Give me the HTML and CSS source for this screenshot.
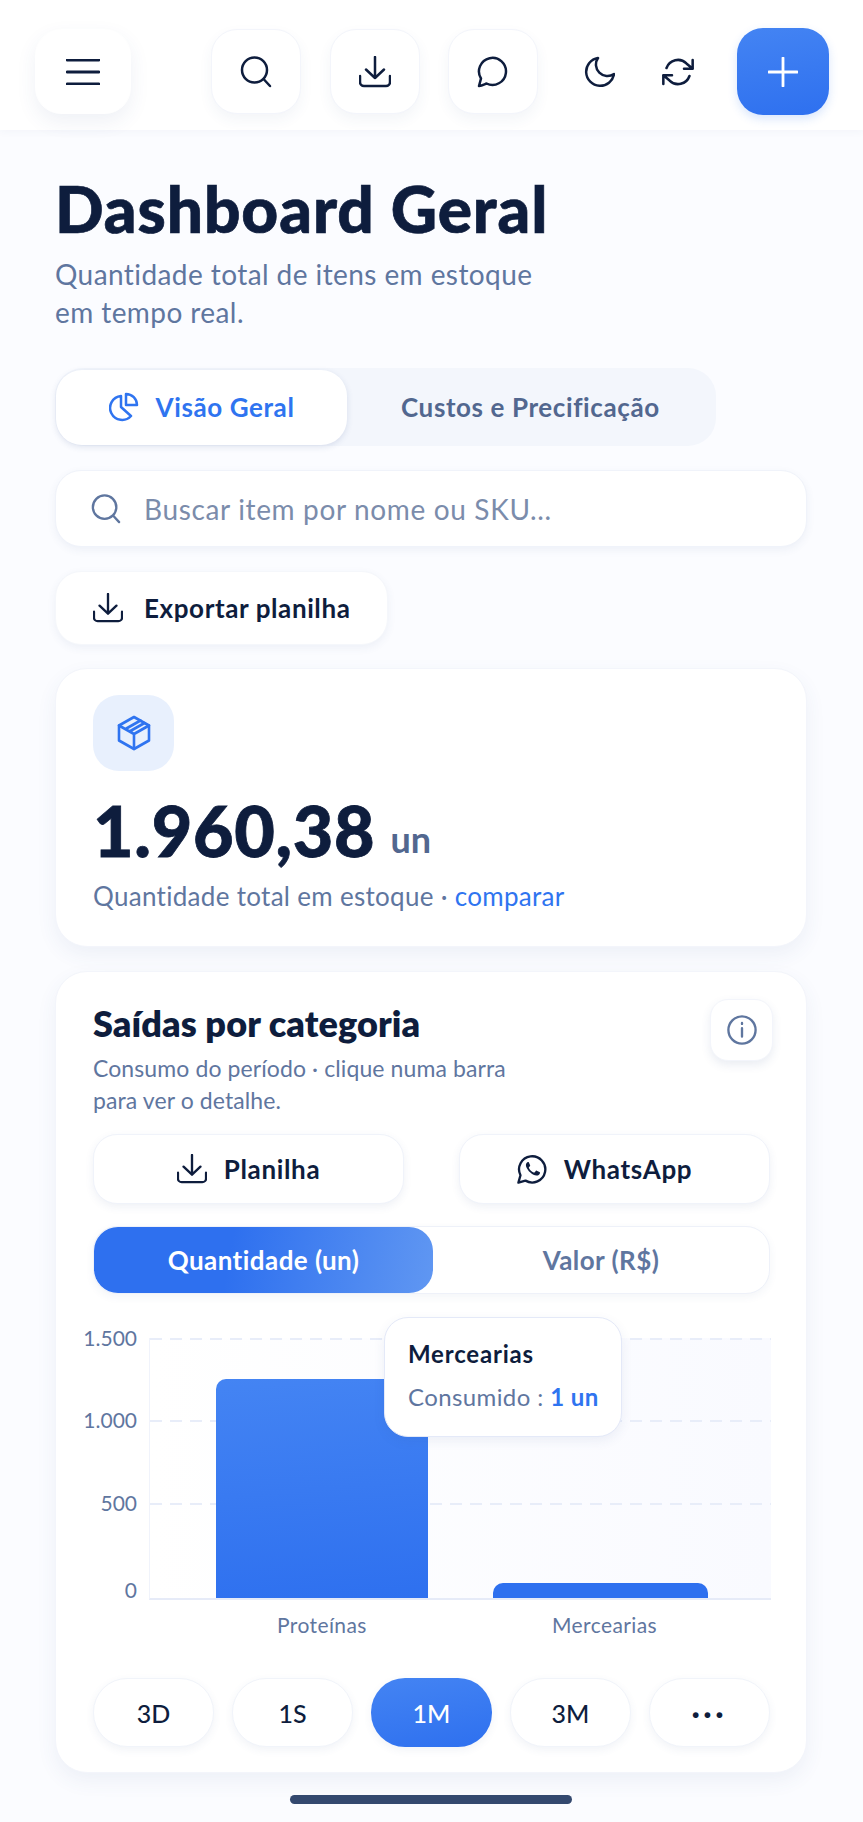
FILE: index.html
```html
<!DOCTYPE html>
<html lang="pt-BR">
<head>
<meta charset="utf-8">
<title>Dashboard Geral</title>
<link rel="stylesheet" href="styles.css">
</head>
<body>
<header class="topbar">
  <button class="icon-btn menu-btn" aria-label="Menu">
    <svg class="ico ico-menu" viewBox="0 0 34 26"><path d="M1 1h32M1 13h32M1 25h32"/></svg>
  </button>
  <div class="top-actions">
    <button class="icon-btn" aria-label="Buscar">
      <svg class="ico" viewBox="0 0 32 32"><circle cx="14.500" cy="14" r="12.500"/><path d="M24 23.500l6 6.500"/></svg>
    </button>
    <button class="icon-btn" aria-label="Baixar">
      <svg class="ico" viewBox="0 0 32 32"><path d="M16 1v21M7 13.500l9 8.500 9-8.500M1 20v6a4 4 0 0 0 4 4h22a4 4 0 0 0 4-4v-6"/></svg>
    </button>
    <button class="icon-btn" aria-label="Mensagens">
      <svg class="ico" viewBox="0 0 32 32"><path d="M2 30l2-7.500A13.500 13.500 0 1 1 9.500 27.500C7 28.500 4.500 29.700 2 30z"/></svg>
    </button>
  </div>
  <button class="plain-btn moon-btn" aria-label="Tema">
    <svg class="ico" viewBox="0 0 32 32"><path d="M15 2A14 14 0 1 0 31 18 11.500 11.500 0 0 1 15 2z"/></svg>
  </button>
  <button class="plain-btn sync-btn" aria-label="Atualizar">
    <svg class="ico ico-sync" viewBox="0 0 24 24"><path d="M23 3v6.500h-6.500M1 21v-6.500h6.500M3.400 9a9 9 0 0 1 14.900-3.400L23 9.500M1 14.500l4.700 3.900A9 9 0 0 0 20.600 15"/></svg>
  </button>
  <button class="add-btn" aria-label="Adicionar">
    <svg class="ico ico-plus" viewBox="0 0 32 32"><path d="M16 1v30M1 16h30"/></svg>
  </button>
</header>

<main class="page">
  <h1 class="title">Dashboard Geral</h1>
  <p class="subtitle">Quantidade total de itens em estoque<br>em tempo real.</p>

  <div class="tabs">
    <button class="tab tab-active">
      <svg class="ico ico-blue ico-30" viewBox="0 0 30 30"><path d="M12 4A12 12 0 1 0 22 24L12 15Z"/><path d="M17 2A11 11 0 0 1 28 13H17Z"/></svg>
      Visão Geral
    </button>
    <button class="tab">Custos e Precificação</button>
  </div>

  <div class="search">
    <svg class="ico ico-muted ico-30" viewBox="0 0 32 32"><circle cx="14.500" cy="14" r="12.500"/><path d="M24 23.500l6 6.500"/></svg>
    <span>Buscar item por nome ou SKU...</span>
  </div>

  <button class="export">
    <svg class="ico ico-30" viewBox="0 0 32 32"><path d="M16 1v21M7 13.500l9 8.500 9-8.500M1 20v6a4 4 0 0 0 4 4h22a4 4 0 0 0 4-4v-6"/></svg>
    Exportar planilha
  </button>

  <section class="card kpi">
    <div class="kpi-icon">
      <svg class="ico ico-blue ico-36" viewBox="0 0 36 36"><path d="M18 2l15 8.500v15L18 34 3 25.500v-15z"/><path d="M3 10.500L18 19l15-8.500M18 19v15M9.500 14l15-8.500M13.500 16.500l15-8.500"/></svg>
    </div>
    <div class="kpi-value">1.960,38 <span class="kpi-unit">un</span></div>
    <p class="kpi-note">Quantidade total em estoque · <a class="link">comparar</a></p>
  </section>

  <section class="card chart-card">
    <div class="chart-head">
      <div>
        <h2 class="chart-title">Saídas por categoria</h2>
        <p class="chart-sub">Consumo do período · clique numa barra<br>para ver o detalhe.</p>
      </div>
      <button class="info-btn" aria-label="Informações">
        <svg class="ico ico-muted ico-30" viewBox="0 0 32 32"><circle cx="16" cy="16" r="14.500"/><path d="M16 14v9M16 8.500v1"/></svg>
      </button>
    </div>

    <div class="share-row">
      <button class="share">
        <svg class="ico ico-30" viewBox="0 0 32 32"><path d="M16 1v21M7 13.500l9 8.500 9-8.500M1 20v6a4 4 0 0 0 4 4h22a4 4 0 0 0 4-4v-6"/></svg>
        Planilha
      </button>
      <button class="share share-wa">
        <svg class="ico ico-30" viewBox="0 0 32 32"><path d="M1.500 30.500l2.200-7.800A14 14 0 1 1 9 28.400z"/><path class="wa-fill" d="M11.500 8.500c-1 .3-2.200 1.700-2 3.800.3 3 4.500 9.500 11 10.700 2.200.3 3.800-1.200 4-2.800 0-.4-.1-.7-.5-.9l-3-1.500c-.4-.2-.7-.1-1 .2l-1.300 1.600c-.3.300-.6.300-1 .2-2-.9-3.900-2.700-5-4.800-.2-.3-.1-.6.100-.8l1.100-1.400c.2-.3.200-.5.100-.8l-1.300-3c-.2-.5-.6-.6-1.200-.5z"/></svg>
        WhatsApp
      </button>
    </div>

    <div class="segment">
      <button class="seg seg-active">Quantidade (un)</button>
      <button class="seg">Valor (R$)</button>
    </div>

    <div class="chart">
      <div class="y-axis">
        <span class="y-tick y-1500">1.500</span>
        <span class="y-tick y-1000">1.000</span>
        <span class="y-tick y-500">500</span>
        <span class="y-tick y-0">0</span>
      </div>
      <div class="plot">
        <i class="grid g-1500"></i>
        <i class="grid g-1000"></i>
        <i class="grid g-500"></i>
        <div class="bar bar-a"></div>
        <div class="bar bar-b"></div>
      </div>
      <div class="x-axis">
        <span class="x-a">Proteínas</span>
        <span class="x-b">Mercearias</span>
      </div>
      <div class="tooltip">
        <strong class="tip-title">Mercearias</strong>
        <span class="tip-row">Consumido : <b class="tip-val">1 un</b></span>
      </div>
    </div>

    <div class="pills">
      <button class="pill">3D</button>
      <button class="pill">1S</button>
      <button class="pill pill-active">1M</button>
      <button class="pill">3M</button>
      <button class="pill pill-more">···</button>
    </div>
  </section>
  <div class="home-bar"></div>
</main>
</body>
</html>
```

FILE: styles.css
```css
* { box-sizing: border-box; }
html, body { margin: 0; padding: 0; }
body {
  width: 863px;
  height: 1822px;
  overflow: hidden;
  background: #fbfcff;
  color: #0e1d3d;
  font-family: "Lato", "Open Sans", sans-serif;
}
button { font: inherit; letter-spacing: inherit; color: inherit; border: 0; background: none; padding: 0; margin: 0; }

.ico { width: 32px; height: 32px; fill: none; stroke: #0e1d3d; stroke-width: 2.500; stroke-linecap: round; stroke-linejoin: round; display: block; flex: none; }
.ico-menu { width: 34px; height: 26px; stroke-width: 2.800; }
.ico-sync { stroke-width: 1.900; }
.ico-30 { width: 30px; height: 30px; }
.ico-36 { width: 36px; height: 36px; stroke-width: 2.600; }
.ico-blue { stroke: #2f74f0; }
.ico-muted { stroke: #5f769f; }
.ico-plus { stroke: #fff; width: 30px; height: 30px; stroke-width: 3; }
.wa-fill { fill: #0e1d3d; stroke: none; }

.topbar {
  height: 130px;
  background: #fff;
  display: flex;
  align-items: center;
  padding: 13px 34px 0 35px;
  box-shadow: 0 2px 8px rgba(40, 70, 130, .04);
  position: relative;
}
.icon-btn {
  width: 90px;
  height: 85px;
  border-radius: 26px;
  background: #fff;
  border: 1px solid #f3f5fb;
  box-shadow: 0 6px 14px rgba(50, 80, 140, .06);
  display: flex;
  align-items: center;
  justify-content: center;
}
.menu-btn { width: 96px; border-color: #fff; box-shadow: 0 8px 20px rgba(50, 80, 140, .08); }
.top-actions { display: flex; gap: 28.500px; margin-left: 80px; }
.plain-btn { width: 32px; height: 32px; display: block; }
.moon-btn { margin-left: 45px; }
.sync-btn { margin-left: 47px; }
.add-btn {
  width: 92px;
  height: 87px;
  margin-left: 43px;
  border-radius: 26px;
  background: linear-gradient(170deg, #4484f3, #2e70ef);
  box-shadow: 0 4px 10px rgba(47, 116, 240, .18);
  display: flex;
  align-items: center;
  justify-content: center;
}

.page { padding: 0 56px 0 55px; }
.title {
  margin: 41px 0 0;
  font-size: 64px;
  line-height: 76px;
  font-weight: 900;
  letter-spacing: .9px;
  -webkit-text-stroke: .7px #0e1d3d;
  color: #0e1d3d;
}
.subtitle {
  margin: 8px 0 0;
  font-size: 28px;
  line-height: 38px;
  letter-spacing: .42px;
  color: #5f769f;
}

.tabs {
  margin-top: 37px;
  width: 661px;
  height: 78px;
  border-radius: 28px;
  background: #f3f6fc;
  display: flex;
  align-items: center;
  font-size: 26px;
  font-weight: 700;
  letter-spacing: .6px;
  color: #52678f;
}
.tab { height: 75px; display: flex; align-items: center; justify-content: center; gap: 17px; padding-bottom: 1px; }
.tab:last-child { margin-left: 54px; }
.tab-active {
  width: 291px;
  margin-left: 1px;
  background: #fff;
  color: #2f74f0;
  border-radius: 26px;
  box-shadow: 0 2px 6px rgba(50, 80, 140, .14);
}

.search {
  margin-top: 24px;
  height: 77px;
  border-radius: 26px;
  background: #fff;
  border: 1px solid #f0f3fa;
  box-shadow: 0 3px 8px rgba(50, 80, 140, .07);
  display: flex;
  align-items: center;
  gap: 23px;
  padding-left: 35px;
  font-size: 28px;
  letter-spacing: .65px;
  color: #7b8cab;
}

.export {
  margin-top: 24px;
  width: 333px;
  height: 74px;
  border-radius: 26px;
  background: #fff;
  border: 1px solid #f5f7fb;
  box-shadow: 0 3px 8px rgba(50, 80, 140, .07);
  display: flex;
  align-items: center;
  gap: 21px;
  padding-left: 37px;
  font-size: 26px;
  font-weight: 700;
  letter-spacing: .6px;
}

.card {
  background: #fff;
  border: 1px solid #f3f5fb;
  border-radius: 32px;
  box-shadow: 0 8px 20px rgba(50, 80, 140, .07);
}
.kpi { margin-top: 23px; height: 279px; padding: 26px 37px; }
.kpi-icon {
  width: 81px;
  height: 76px;
  border-radius: 26px;
  background: #e8f0fd;
  display: flex;
  align-items: center;
  justify-content: center;
}
.kpi-value {
  margin-top: 24px;
  font-size: 70px;
  line-height: 70px;
  font-weight: 900;
  color: #0e1d3d;
  display: flex;
  align-items: baseline;
  gap: 15px;
  letter-spacing: .7px;
  -webkit-text-stroke: .8px #0e1d3d;
}
.kpi-unit { font-size: 36px; font-weight: 700; color: #52678f; letter-spacing: 0; -webkit-text-stroke: 0; transform: translateY(-4px); }
.kpi-note { margin: 1px 0 0; font-size: 26px; line-height: 34px; letter-spacing: .3px; color: #5f769f; }
.link { color: #2f74f0; }

.chart-card { margin-top: 24px; height: 802px; padding: 27px 36px 0 37px; }
.chart-head { display: flex; justify-content: space-between; align-items: flex-start; }
.chart-title { margin: 2px 0 0; font-size: 36px; line-height: 44px; font-weight: 800; letter-spacing: .1px; color: #0e1d3d; }
.chart-sub { margin: 7px 0 0; font-size: 23px; line-height: 32px; letter-spacing: .1px; color: #5f769f; }
.info-btn {
  width: 63px;
  height: 62px;
  margin-right: -3px;
  border-radius: 18px;
  background: #fff;
  border: 1px solid #f3f5fb;
  box-shadow: 0 4px 10px rgba(50, 80, 140, .1);
  display: flex;
  align-items: center;
  justify-content: center;
}
.share-row { margin-top: 18px; display: flex; justify-content: space-between; }
.share {
  width: 311px;
  height: 70px;
  border-radius: 24px;
  background: #fff;
  border: 1px solid #f0f3fa;
  box-shadow: 0 3px 8px rgba(50, 80, 140, .08);
  display: flex;
  align-items: center;
  justify-content: center;
  gap: 17px;
  font-size: 26px;
  font-weight: 700;
  letter-spacing: .65px;
}
.share-wa { padding-right: 20px; }
.segment {
  margin-top: 22px;
  height: 68px;
  width: 677px;
  border-radius: 24px;
  background: #fff;
  border: 1px solid #eef1f9;
  box-shadow: 0 3px 8px rgba(50, 80, 140, .06);
  display: flex;
  font-size: 26px;
  font-weight: 700;
  letter-spacing: .45px;
  color: #5f769f;
}
.seg { flex: 1; }
.seg-active {
  flex: none;
  width: 339px;
  color: #fff;
  border-radius: 24px;
  background: linear-gradient(100deg, #2e70ef 40%, #6097f2);
}

.chart { position: relative; margin-top: 20px; height: 348px; }
.y-axis { position: absolute; left: -20px; top: 0; width: 64px; height: 100%; font-size: 21px; color: #5f769f; }
.y-tick { position: absolute; right: 0; line-height: 26px; }
.y-1500 { top: 11px; }
.y-1000 { top: 93px; }
.y-500 { top: 176px; }
.y-0 { top: 263px; }
.plot {
  position: absolute;
  left: 56px;
  top: 24px;
  width: 622px;
  height: 262px;
  background: linear-gradient(90deg, #fff, #f9faff);
  border-left: 1px solid #f0f3fb;
  border-bottom: 2px solid #e6ebf8;
}
.grid { position: absolute; left: 0; right: 0; height: 2px; background: repeating-linear-gradient(90deg, #e8edf9 0 12px, transparent 12px 20px); }
.g-1500 { top: 0; }
.g-1000 { top: 82px; }
.g-500 { top: 165px; }
.bar { position: absolute; bottom: 0; background: linear-gradient(175deg, #4484f3, #2e70ef); border-radius: 10px 10px 0 0; }
.bar-a { left: 66px; width: 212px; height: 219px; }
.bar-b { left: 343px; width: 215px; height: 15px; background: #2e70ef; }
.x-axis { position: absolute; top: 298px; left: 0; width: 100%; font-size: 21px; line-height: 26px; letter-spacing: .4px; color: #5f769f; }
.x-a { position: absolute; left: 184px; }
.x-b { position: absolute; left: 459px; }
.tooltip {
  position: absolute;
  left: 291px;
  top: 3px;
  width: 238px;
  height: 120px;
  background: #fff;
  border: 1px solid #e4e9f8;
  border-radius: 24px;
  box-shadow: 0 4px 12px rgba(50, 80, 140, .08);
  padding: 21px 23px;
  display: flex;
  flex-direction: column;
  gap: 13px;
  font-size: 24px;
  line-height: 30px;
}
.tip-title { font-weight: 700; letter-spacing: .8px; color: #0e1d3d; }
.tip-row { color: #5f769f; white-space: nowrap; letter-spacing: .4px; }
.tip-val { color: #2f74f0; font-weight: 700; }

.pills { margin-top: 16px; display: flex; justify-content: space-between; }
.pill {
  width: 121px;
  height: 69px;
  border-radius: 34px;
  background: #fff;
  border: 1px solid #f1f4fa;
  box-shadow: 0 3px 8px rgba(50, 80, 140, .07);
  font-size: 25px;
  font-weight: 500;
  color: #0e1d3d;
}
.pill-active { background: linear-gradient(170deg, #4484f3, #2e70ef); color: #fff; border: 0; }
.pill-more { font-weight: 900; letter-spacing: 4px; font-size: 28px; }

.home-bar { width: 282px; height: 9px; margin: 22px auto 0; border-radius: 5px; background: #34496f; }
```
